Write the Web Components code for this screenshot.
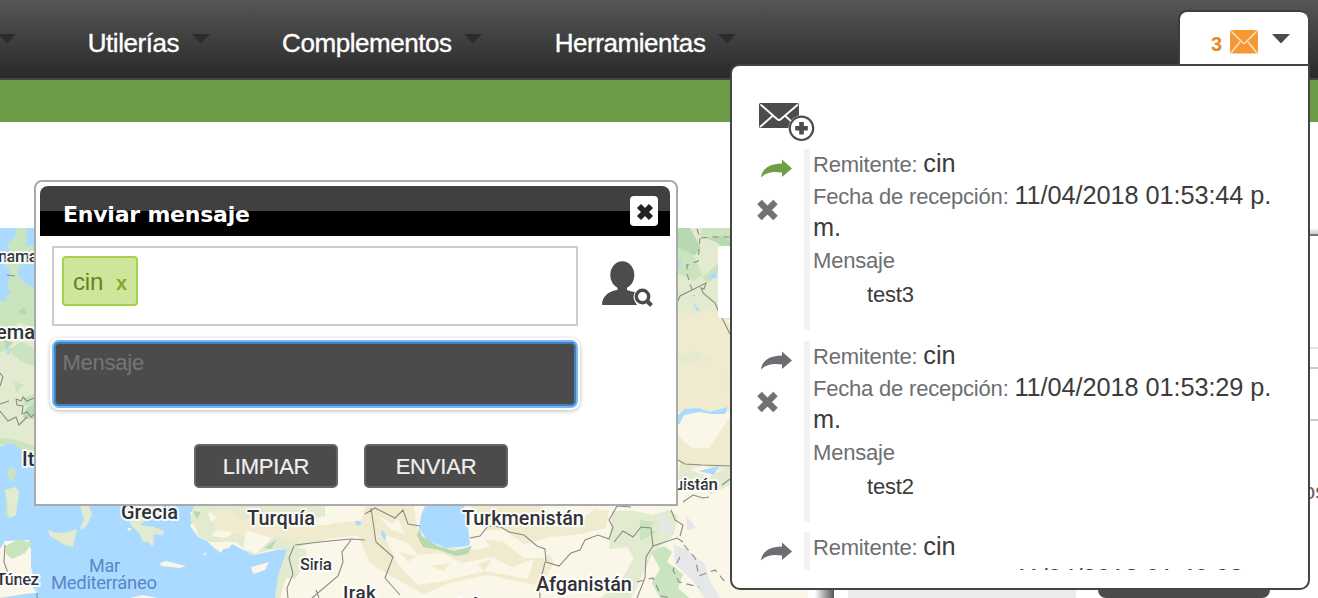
<!DOCTYPE html>
<html lang="es">
<head>
<meta charset="utf-8">
<title>Mensajes</title>
<style>
html,body{margin:0;height:598px;overflow:hidden;background:#fff;font-family:"Liberation Sans",Arial,sans-serif}
</style>
</head>
<body>
<app-page></app-page>
<script>
function define(name, html){
  const t=document.createElement('template');
  t.innerHTML=html;
  customElements.define(name,class extends HTMLElement{
    constructor(){super();this.attachShadow({mode:'open'}).append(t.content.cloneNode(true));}
  });
}

define('nav-item',`<style>
:host{display:flex;gap:12.500px;color:#fff;font-size:26px;letter-spacing:-.44px;line-height:30px;white-space:nowrap;-webkit-text-stroke:.35px #fff}
svg{display:block;margin-top:6px}
</style><span><slot></slot></span><svg width="18" height="9"><path d="M0 0H18L9 9.500Z" fill="#2c2c2c"/></svg>`);

define('nav-bar',`<style>
:host{display:flex;box-sizing:border-box;height:80px;padding:28px 0 0 87.700px;gap:72.500px;background:linear-gradient(#565656,#292929);border-bottom:2px solid #444;position:relative}
.edge{position:absolute;left:-2px;top:34px}
</style><svg class="edge" width="18" height="9"><path d="M0 0H18L9 9.500Z" fill="#2c2c2c"/></svg>
<nav-item>Utilerías</nav-item><nav-item>Complementos</nav-item><nav-item>Herramientas</nav-item>`);

define('world-map',`<style>
:host{display:block;width:808px;height:370px;flex:none}
svg{display:block}
text{font-family:Roboto,sans-serif;font-weight:500;fill:#303238;stroke:#fff;stroke-opacity:.85;stroke-width:4px;stroke-linejoin:round;paint-order:stroke}
.sea{fill:#5a86c8;font-weight:400;stroke:none}
.w{fill:#aadaff}.g{fill:#c9e4bf}.d{fill:#b7d9b2}.c{fill:#f0ebce}.l{fill:#e2ebcf}.p{fill:#faf6e8}
.b{fill:none;stroke:#8b8b85;stroke-width:1.1}
</style>
<svg width="808" height="370" viewBox="0 228 808 370">
<path class="p" d="M0 228H808V598H0Z"/>
<!-- northern Europe -->
<path class="l" d="M0 228H40V460H0Z"/>
<path class="g" d="M0 228H40V330L18 322 8 350 0 352ZM8 350l14-8 12 6v18l-12-4zM14 382l10 3-8 8zM24 398l11-5v14l-12-2z"/>
<path class="w" d="M0 228H17L14 238 6 246 12 252 10 262 0 268ZM27 228H36V246L26 246ZM0 266l9 2 1 9-3 11 4 5-5 2v6H0ZM20 265l14-1v24l-10-5-6-8zM6 352l5-5-2 8z"/>
<path class="d" d="M18 312l6-5 3 6-4 2zM4 340l9 3-7 6zM26 408l9-4v15l-12-1z"/>
<path class="b" d="M7 275l8 1M0 373l3 4-3 9M0 404l9-3M16 399l5 2 2-4 4 4 7-3M16 399l1 6 6 1-1 8 5-2 4 5 4-3M0 411l8 10 8-4 3 8 8-8"/>
<!-- Mediterranean -->
<path class="w" d="M0 447L9 443 20 446 24 452 35 457V500H82L88 521 79 530 83 516 78 506H195L190 514 194 520 190 526 198 537 207 541 212 546 219 550 229 548 232 544 243 550 254 555 277 550 287 549 285 560 281 575 278 598H0V592L20 590 34 583 38 594 31 567V548L10 542 0 549Z"/>
<path class="g" d="M0 438l10 1 10 2 15 6v9l-12-5-10-8-13 2z"/>
<path class="g" d="M8 469l6-2 2 8-3 7-5-4zM5 490l10-3 4 5-3 23-7 3-4-3 2-15z"/>
<path class="l" d="M5 490l10-3 4 5-3 23-7 3zM48 530l8 3 12-1 9-3-4 18-8-2-15-9zM80 506h9l3 9-5 10-5 5-2-2 4-9z"/>
<path class="l" d="M121 506h44v8l-15 3-10 8 14 2 10 4-1 4-9-1-1 13-5-5-5 0-3-8-8-8z"/>
<path class="p" d="M0 549l5-8 24-1 2 20-4 19 10 14-12 1-25 4Z"/>
<path class="g" d="M6 546l13-7 13 4-7 10-13 6-6-5z"/>
<path class="p" d="M160 563l6-2 20 5-6 2-19-2zM251 567l18-5-4 8-12 4zM203 554l4-2-2 4zM127 528l5 0-3 3zM130 598l12-3 16 3z"/>
<path class="l" d="M194 506H325V540L290 549 270 550 251 555 236 542 210 542 198 536 196 528 190 520Z"/>
<path class="c" d="M210 510l22 0 10 10 24-8 30 5 10 9 60-6 9 14-42 4-31 5-25-7-22 4-20-6-16 5z"/>
<path class="p" d="M208 512l9 5-6 5zM216 530l18 2-8 6-14-2zM229 540l-8 13-8-6zM246 530l26 8-16 16-13-6zM310 520l13-4 9 8-16 2z"/>
<path class="w" d="M355 521l6 0 2 5-7-1zM311 522l2 3-3-1z"/>
<path class="d" d="M264 548l13-9-6 10zM193 511l8 1-4 7z"/>
<!-- Middle east and central Asia -->
<path class="l" d="M288 546l18 3 1 12-12 18-9-1-6 20h-5l3-22 5-15z"/>
<path class="c" d="M365 506h49l4 28 14 12 46 4 28-9 36-1 12 22-13 24-54-11-38 8-25 11-30-16-24-15-12-28z"/>
<path class="p" d="M384 535l24 8 10 12 24-2 20 10 30-6 20 10 22-8-6 20-44-8-40 10-26 4-20-20zM377 515l16 9 5-5 7 15-13-4z"/>
<path class="c" d="M400 552l16 4-8 6zM430 566l20-3-6 8zM478 564l14-5-8 12z"/>
<path class="w" d="M425 506h39l3 14 3 24-2 2-7 1-15 1-19-8-8-12 2-12zM382 530l4 5-1 6-4-7z"/>
<path class="d" d="M419 528l3 8 16 10 16 5 18-5-4 8-12 2-17-6-16-3-6-11z"/>
<path class="c" d="M470 506h70l14 10 30 1 11-8 14 2-3 17-25 6-26 3-31 17-24 4-16-19 4-15z"/>
<path class="p" d="M474 530l30 0 20 14 30-8 10 8-20 14-20 0-20-16-30-4z"/>
<path class="l" d="M612 511l23 0 17 4 17-5 9 6-4 18-21 19-12 25-10 20h-30l21-19 12-21-7-11-18 2z"/>
<path class="g" d="M640 520l14 2-5 7 8 3-17 9zM651 552l13-6 8 6-5 10 16 12-5 14 11 10h-29l-8-15 8-14z"/>
<path d="M658 513l13 8 3 10-12 5zM674 545l12 4 18 14 6 18 10 17h-16l-11-17-18-17zM686 515l10 13-9 2z" fill="#e6e7e9"/>
<!-- Kazakhstan and Mongolia side -->
<path class="l" d="M676 228H808V320H676Z"/>
<path class="g" d="M676 228h54v44l-9-3-13 14-8-7-6 5-18-9z"/>
<path class="d" d="M676 228h22l5 15-7 13-20-10zM704 239l17-3 9 5v9l-14-8z"/>
<path class="l" d="M690 228h12l-2 8 18 7 6 12 6-1v15l-13-5-14 13-9-21 7-8z"/>
<path class="c" d="M676 309l18 7 19-10 17 17v89h-54z"/>
<path class="l" d="M676 352l10 4 4-5 13 3-6 7-13 2-8-4zM701 359l9-3-5 8zM722 375l8 9-2 2z"/>
<path class="p" d="M676 412h54v90h-54z"/>
<path class="c" d="M676 434l16 14 17 0 21-31v50l-13 4-13-6-13 5-15-10z"/>
<path class="w" d="M676 417l9-8 14-1 11 4 18-5-3 7-13 0-13-2-15 3-4 8-4 3zM676 265l6-7-2 8zM708 277l8-5 1 5-5 2zM699 471l20-5-5 9zM692 302l8 8-3 1z"/>
<path class="l" d="M680 463l15-1-5 8 20 7 20-12v20l-19 9-11-8-14-1-8-5z"/>
<path class="b" d="M697 229l3 9 13-1 17 0M700 238l-2 23-11 4 0 9 7 22" stroke-dasharray="6 5"/>
<path class="b" d="M678 301l2-5 26-13-2 6-3-1 2 5 12 10 3 7 12 24M676 459l9 5 17 1 28 1M683 502l10-7 10 3 6-1M722 485l8-6"/>
<path class="b" d="M365 514l10-6 20 10 8-8 5 14 12 2M371 508l5 34 17 15-8 21 15 17M5 545l-1 17 4 11M37 593v5M295 545l34-4 22-2 14 1M351 540l-9 12 1 10-5 14-26 22M316 590l3 8M294 546l-5 12 4 16-6 14 1 10M470 538l10-2 8-10 13 1 8 5 15 3 13 11 8 3 1 13 13 4 12-13 9-3 5-10 13-5 11 4 4-12-4-7 8-14 14 1M545 562l-2 9-4 11 1 16M614 542l9-11 10 6 8-10 10 1 2 18 24-8 6 4M653 546l-7 11-1 21-8 20M671 510l4 10 8 5-3 11" />
<path class="b" d="M684 545l11 13 4 18 16-6 11 13M680 557l-7 13 6 12 20 5M637 582l16-4 8 18 10 2" stroke-dasharray="7 5"/>
<text x="-2" y="262" font-size="17" textLength="40">nama</text>
<text x="-4" y="339" font-size="20">eman</text>
<text x="22" y="466" font-size="20">It</text>
<text x="121" y="519" font-size="20" textLength="57">Grecia</text>
<text x="247" y="525" font-size="20" textLength="68">Turquía</text>
<text x="462" y="525" font-size="20" textLength="122">Turkmenistán</text>
<text x="536" y="591" font-size="20" textLength="96">Afganistán</text>
<text x="300" y="570" font-size="17" textLength="32">Siria</text>
<text x="343" y="599" font-size="19" textLength="33">Irak</text>
<text x="457" y="611" font-size="19">Irán</text>
<text x="-4" y="585" font-size="17" textLength="43">Túnez</text>
<text x="674" y="490" font-size="17" textLength="44">uistán</text>
<text class="sea" x="89" y="572" font-size="18" textLength="31">Mar</text>
<text class="sea" x="51" y="589" font-size="18.500" textLength="106">Mediterráneo</text>
<rect x="718" y="246" width="50" height="72" rx="3" fill="#fff"/>
</svg>`);

define('side-panel',`<style>
:host{display:flex;flex:1;min-width:0}
.sh{width:26px;flex:none;background:linear-gradient(90deg,#fff 25%,#555)}
.body{flex:1;min-width:0;display:flex;flex-direction:column}
.top{height:6px;background:linear-gradient(#fff,#ccc);border-bottom:2px solid #77777b}
.r1{height:112px;border-bottom:2px solid #e5e5e5}
.r2{height:18px;border-bottom:2px solid #ccc}
.r3{height:50px;border-bottom:2px solid #ccc}
.t{height:168px;box-sizing:border-box;padding:57px 0 0 469px;color:#666;font-size:22px;line-height:28px;white-space:nowrap}
.foot{display:flex;gap:22px;padding-left:14px}
.foot i{width:228px;flex:none;background:#ebebeb}.foot b{width:172px;flex:none;height:10px;background:#4b4b4b;border-radius:0 0 8px 8px}
</style><div class="sh"></div><div class="body"><div class="top"></div><div class="r1"></div><div class="r2"></div><div class="r3"></div><div class="t">os</div><div class="foot"><i></i><b></b></div></div>`);

define('form-button',`<style>
:host{display:flex;align-items:center;justify-content:center;box-sizing:border-box;width:144px;height:44px;border:2px solid #666;border-radius:5px;background:#4b4b4b;color:#efefef;font-size:22px;letter-spacing:-.2px;-webkit-text-stroke:.2px #efefef}
span{padding-top:1px}
</style><span><slot></slot></span>`);

define('user-tag',`<style>
:host{display:flex;align-items:center;box-sizing:border-box;width:76px;height:50px;padding:2px 9px 0;gap:13px;border:2px solid #a5d24a;border-radius:4px;background:#cde69c;color:#638421;font-size:24px;letter-spacing:-.2px}
b{color:#82ad2b;font-size:20px;padding-top:3px}
</style><slot></slot><b>x</b>`);

define('message-dialog',`<style>
:host{display:block;box-sizing:border-box;border:2px solid #aaa;border-radius:8px 8px 0 0;background:#fff;padding:4px 6px 0 4px}
header{display:flex;justify-content:space-between;align-items:center;height:50px;padding:0 12px 0 23px;border-radius:8px 8px 0 0;background:linear-gradient(#404040 50%,#000 50%)}
h1{margin:0;padding-top:7px;font:bold 22px/26px "DejaVu Sans",Verdana,sans-serif;letter-spacing:-.22px;color:#fff}
.x{display:block;border-radius:4px;background:#fff}
.to{display:flex;align-items:flex-start;gap:24px;padding:10px 0 0 12px}
.box{box-sizing:border-box;width:526px;height:80px;border:2px solid #ccc;padding:8px}
.area{box-sizing:border-box;width:526px;height:68px;margin:14px 0 0 12px;padding:6px 8.500px;border:2px solid #7ab5f6;border-radius:7px;background:#4b4b4b;box-shadow:inset 0 0 0 2px #4080c2,0 0 0 2px #fff,0 1px 4px 2px rgba(0,0,0,.28);color:#757575;font-size:22px;line-height:30px;letter-spacing:-.25px}
.act{display:flex;gap:26px;padding:36px 0 0 154px}
</style>
<header><h1>Enviar mensaje</h1><svg class="x" width="28" height="30"><path d="M9 10L21 22M21 10L9 22" stroke="#222" stroke-width="5.800"/></svg></header>
<div class="to"><div class="box"><user-tag>cin</user-tag></div>
<svg width="52" height="64" viewBox="602 246 52 64"><ellipse cx="622.300" cy="275" rx="12" ry="13.800" fill="#4b4d4c"/><path d="M617.500 285h9.500v5c1 1 6 1 9 3l-1 8 2 4H602c0-8 6-14 15.500-15z" fill="#4b4d4c"/><circle cx="642.500" cy="297" r="9" fill="#fff"/><circle cx="642.500" cy="296.500" r="6.200" fill="none" stroke="#4b4d4c" stroke-width="3.400"/><path d="M646.500 300.500l5 5" stroke="#4b4d4c" stroke-width="4"/></svg></div>
<div class="area">Mensaje</div>
<div class="act"><form-button>LIMPIAR</form-button><form-button>ENVIAR</form-button></div>`);

define('inbox-tab',`<style>
:host{display:flex;box-sizing:border-box;border:2px solid #3e3e3e;border-bottom:0;border-right:0;border-radius:9px 9px 0 0;background:#fff;padding:18px 0 0 31px}
b{color:#e08a2c;font-size:20px;line-height:24px;margin-top:2px;width:19px}
.a{margin:4px 0 0 14px}
</style><b>3</b><svg width="28" height="24"><rect width="28" height="23.500" rx="1.500" fill="#f79734"/><path d="M1 1L13 13Q14 14 15 13L27 1M1 23L10 12M27 23L18 12" stroke="#fde0bd" stroke-width="1.600" fill="none"/></svg><svg class="a" width="18" height="9"><path d="M0 0H18L9 9.500Z" fill="#4b4d4c"/></svg>`);

define('inbox-message',`<style>
:host{display:flex;height:181px;margin-bottom:10.600px;color:#6d6e71;flex:none}
:host([unread]){--arrow:#6e9f46}
.ic{width:48px;flex:none;display:flex;flex-direction:column}
.ic svg{display:block}
.tx{flex:1;border-left:6px solid #f2f2f2;padding-left:3px;font-size:22px;letter-spacing:-.2px;line-height:32px}
::slotted(span){color:#3c3c3c;font-size:25.300px;letter-spacing:-.07px;line-height:24px}
</style>
<div class="ic"><svg width="40" height="75" viewBox="756 149 40 75"><path d="M761 177.500C762 168.500 770 163.500 782 163.500V159.500L792 168.500L782 177V172.500C772 171 766 172.500 761 177.500Z" fill="var(--arrow,#6d6e71)"/><path d="M759.500 202L775.500 218M775.500 202L759.500 218" stroke="#717275" stroke-width="6.400"/></svg></div>
<div class="tx"><div>Remitente: <slot name="from"></slot></div><div>Fecha de recepción: <slot name="date"></slot></div><slot name="rest"></slot></div>`);

define('message-body',`<style>
:host{display:block;line-height:32px;color:#6d6e71;font-size:22px;letter-spacing:-.2px}
p{margin:0;padding:2px 0 0 54px;color:#3c3c3c}
</style>Mensaje<p><slot></slot></p>`);

define('inbox-menu',`<style>
:host{display:block;box-sizing:border-box;border:2px solid #444;border-radius:9px 0 10px 10px;background:#fff;padding:34px 24px 0}
.new{display:block;margin-left:2px}
.list{display:flex;flex-direction:column;height:421px;overflow:hidden;margin-top:6px}
</style>
<svg class="new" width="58" height="43" viewBox="758 100 58 43"><rect x="759" y="103" width="40" height="25" rx="1.500" fill="#4b4d4c"/><path d="M760.500 104.500L777 119Q779 121 781 119L798 104.500M760 127L773 115.500M797 127L785.500 116" stroke="#fff" stroke-width="1.800" fill="none"/><circle cx="801.500" cy="128.300" r="13" fill="#fff"/><circle cx="801.500" cy="128.300" r="11.700" fill="#fff" stroke="#4b4d4c" stroke-width="2.200"/><path d="M801.500 122v12.600M795.200 128.300h12.600" stroke="#4b4d4c" stroke-width="4.600"/></svg>
<div class="list">
<inbox-message unread><span slot="from">cin</span><span slot="date">11/04/2018 01:53:44 p. m.</span><message-body slot="rest">test3</message-body></inbox-message>
<inbox-message><span slot="from">cin</span><span slot="date">11/04/2018 01:53:29 p. m.</span><message-body slot="rest">test2</message-body></inbox-message>
<inbox-message><span slot="from">cin</span><span slot="date">11/04/2018 01:49:08</span></inbox-message>
</div>`);

define('app-page',`<style>
:host{display:block;position:relative;width:1318px;height:598px;overflow:hidden}
.green{height:42px;background:#6e9b46}
.space{height:106px}
.main{display:flex;height:370px}
message-dialog{position:absolute;left:34px;top:180px;width:644px;height:326px}
inbox-menu{position:absolute;left:730px;top:64px;width:580px;height:526px}
inbox-tab{position:absolute;left:1178px;top:10px;width:130px;height:54px}
</style><nav-bar></nav-bar><div class="green"></div><div class="space"></div>
<div class="main"><world-map></world-map><side-panel></side-panel></div>
<message-dialog></message-dialog><inbox-menu></inbox-menu><inbox-tab></inbox-tab>`);
</script>
</body>
</html>
